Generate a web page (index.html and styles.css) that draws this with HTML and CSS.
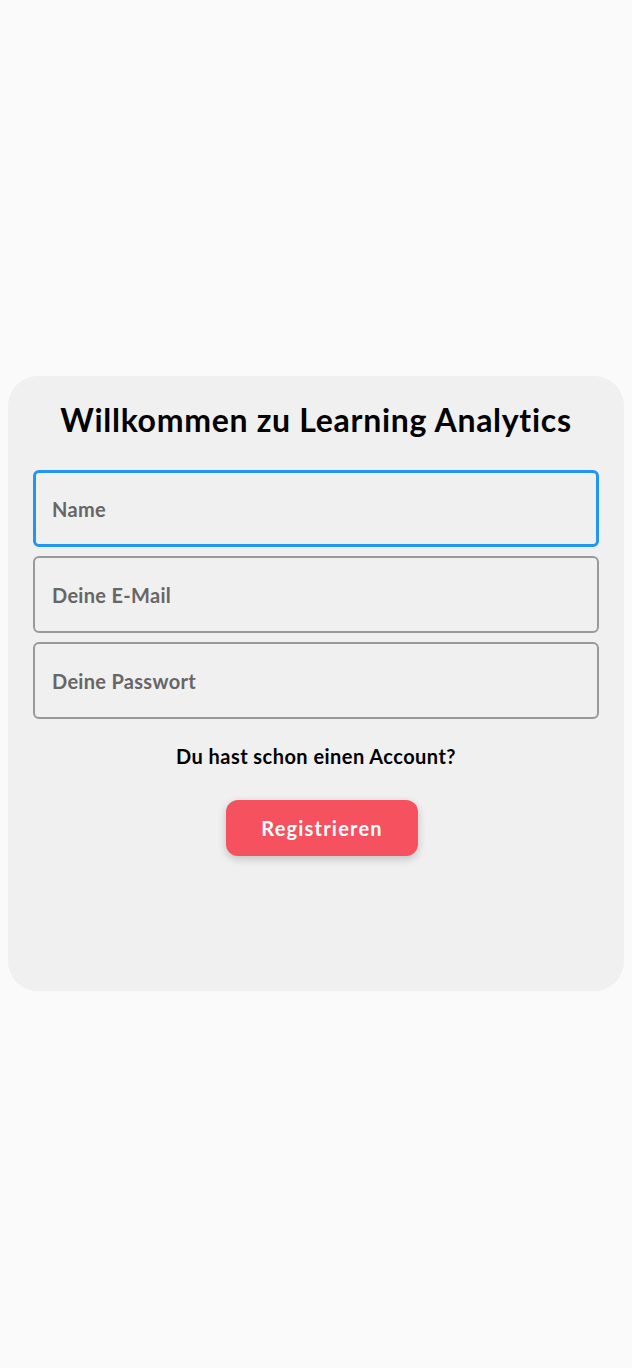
FILE: index.html
```html
<!DOCTYPE html>
<html lang="de">
<head>
<meta charset="utf-8">
<title>Learning Analytics</title>
<link rel="stylesheet" href="styles.css">
</head>
<body>
<main class="page">
  <form class="card">
    <h1 class="title">Willkommen zu Learning Analytics</h1>
    <div class="fields">
      <input class="field field-focus" type="text" placeholder="Name">
      <input class="field" type="email" placeholder="Deine E-Mail">
      <input class="field" type="password" placeholder="Deine Passwort">
    </div>
    <p class="hint">Du hast schon einen Account?</p>
    <button class="btn" type="button">Registrieren</button>
  </form>
</main>
</body>
</html>
```

FILE: styles.css
```css
* { box-sizing: border-box; }
html, body { margin: 0; padding: 0; }
body {
  background: #fafafa;
  font-family: "Lato", "Noto Sans", sans-serif;
  color: #000;
}
.page {
  min-height: 1368px;
  display: flex;
  flex-direction: column;
  justify-content: center;
  padding: 0 8px 1px;
}
.card {
  background: #f0f0f0;
  border-radius: 30px;
  padding: 20px 25px 135px;
  display: flex;
  flex-direction: column;
  align-items: center;
}
.title {
  margin: 0;
  font-size: 32px;
  line-height: 48px;
  font-weight: 700;
  letter-spacing: 0.7px;
  text-align: center;
}
.fields {
  margin-top: 26px;
  width: 100%;
  display: flex;
  flex-direction: column;
  gap: 9px;
}
.field {
  width: 100%;
  height: 77px;
  border: 2px solid #999;
  border-radius: 6px;
  background: #f0f0f0;
  padding: 0 17px;
  font-family: inherit;
  font-size: 20px;
  font-weight: 700;
  letter-spacing: 0.3px;
  color: #333;
  outline: none;
}
.field::placeholder { color: #666; opacity: 1; }
.field-focus {
  border: 3px solid #2196f3;
  padding: 0 16px;
}
.hint {
  margin: 25px 0 0;
  font-size: 20px;
  line-height: 24px;
  font-weight: 700;
  letter-spacing: 0.45px;
  text-align: center;
}
.btn {
  margin: 32px 0 0 12px;
  width: 192px;
  height: 56px;
  border: none;
  border-radius: 12px;
  background: #f5515f;
  color: #fff;
  font-family: inherit;
  font-size: 20px;
  font-weight: 700;
  letter-spacing: 1.2px;
  box-shadow: 0 3px 8px rgba(0,0,0,0.2);
  cursor: pointer;
}
```
